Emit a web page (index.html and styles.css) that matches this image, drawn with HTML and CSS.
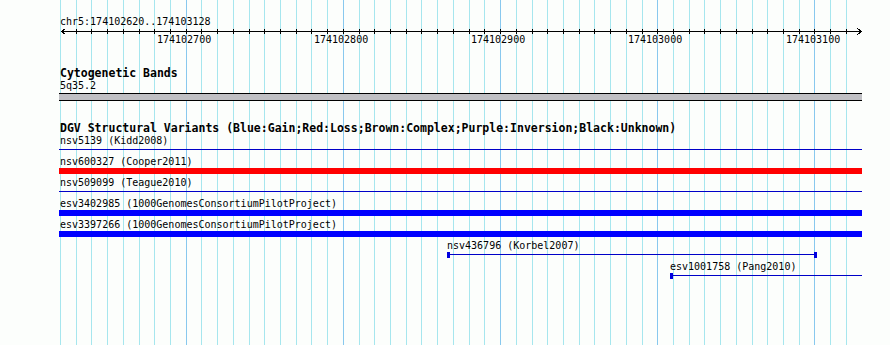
FILE: index.html
```html
<!DOCTYPE html>
<html lang="en">
<head>
<meta charset="utf-8">
<title>chr5:174102620..174103128</title>
<link rel="stylesheet" href="styles.css">
</head>
<body>
<div class="panel">
  <svg class="grid" width="890" height="345" viewBox="0 0 890 345" aria-hidden="true">
    <path class="grid-minor" d="M60.5 0V345M76.5 0V345M91.5 0V345M107.5 0V345M123.5 0V345M139.5 0V345M154.5 0V345M170.5 0V345M201.5 0V345M217.5 0V345M233.5 0V345M249.5 0V345M264.5 0V345M280.5 0V345M296.5 0V345M311.5 0V345M327.5 0V345M359.5 0V345M374.5 0V345M390.5 0V345M406.5 0V345M421.5 0V345M437.5 0V345M453.5 0V345M469.5 0V345M484.5 0V345M516.5 0V345M532.5 0V345M547.5 0V345M563.5 0V345M579.5 0V345M594.5 0V345M610.5 0V345M626.5 0V345M642.5 0V345M673.5 0V345M689.5 0V345M704.5 0V345M720.5 0V345M736.5 0V345M752.5 0V345M767.5 0V345M783.5 0V345M799.5 0V345M830.5 0V345M846.5 0V345"/>
    <path class="grid-major" d="M186.5 0V345M343.5 0V345M500.5 0V345M657.5 0V345M814.5 0V345"/>
  </svg>

  <div class="tracks">
    <section class="ruler">
      <div class="ruler-title">chr5:174102620..174103128</div>
      <svg class="ruler-axis" width="803" height="6" viewBox="0 0 803 6" aria-hidden="true">
        <path class="axis-line" d="M2 3.5H802"/>
        <path class="axis-ticks" d="M17.5 1v5M32.5 1v5M48.5 1v5M64.5 1v5M80.5 1v5M95.5 1v5M111.5 1v5M127.5 1v5M142.5 1v5M158.5 1v5M174.5 1v5M190.5 1v5M205.5 1v5M221.5 1v5M237.5 1v5M252.5 1v5M268.5 1v5M284.5 1v5M300.5 1v5M315.5 1v5M331.5 1v5M347.5 1v5M362.5 1v5M378.5 1v5M394.5 1v5M410.5 1v5M425.5 1v5M441.5 1v5M457.5 1v5M473.5 1v5M488.5 1v5M504.5 1v5M520.5 1v5M535.5 1v5M551.5 1v5M567.5 1v5M583.5 1v5M598.5 1v5M614.5 1v5M630.5 1v5M645.5 1v5M661.5 1v5M677.5 1v5M693.5 1v5M708.5 1v5M724.5 1v5M740.5 1v5M755.5 1v5M771.5 1v5M787.5 1v5"/>
        <path class="axis-arrow" d="M6.5 0.5L2.5 3.5L6.5 6.5M798.5 0.5L802.5 3.5L798.5 6.5"/>
      </svg>
      <div class="ruler-labels">
        <span class="tick-label" style="left:98px">174102700</span>
        <span class="tick-label" style="left:255px">174102800</span>
        <span class="tick-label" style="left:412px">174102900</span>
        <span class="tick-label" style="left:569px">174103000</span>
        <span class="tick-label" style="left:727px">174103100</span>
      </div>
    </section>

    <section class="track track-cyto">
      <h2 class="track-title">Cytogenetic Bands</h2>
      <div class="feature-label pad">5q35.2</div>
      <div class="band"></div>
    </section>

    <section class="track track-dgv">
      <h2 class="track-title">DGV Structural Variants (Blue:Gain;Red:Loss;Brown:Complex;Purple:Inversion;Black:Unknown)</h2>

      <div class="feature">
        <div class="feature-label pad">nsv5139 (Kidd2008)</div>
        <div class="glyph line"></div>
      </div>
      <div class="feature">
        <div class="feature-label pad">nsv600327 (Cooper2011)</div>
        <div class="glyph bar bar-loss"></div>
      </div>
      <div class="feature">
        <div class="feature-label pad">nsv509099 (Teague2010)</div>
        <div class="glyph line"></div>
      </div>
      <div class="feature">
        <div class="feature-label pad">esv3402985 (1000GenomesConsortiumPilotProject)</div>
        <div class="glyph bar bar-gain"></div>
      </div>
      <div class="feature">
        <div class="feature-label pad">esv3397266 (1000GenomesConsortiumPilotProject)</div>
        <div class="glyph bar bar-gain"></div>
      </div>
      <div class="feature" style="margin-left:388px;width:370px">
        <div class="feature-label">nsv436796 (Korbel2007)</div>
        <div class="glyph line cap-left cap-right"></div>
      </div>
      <div class="feature" style="margin-left:611px;width:192px">
        <div class="feature-label">esv1001758 (Pang2010)</div>
        <div class="glyph line cap-left"></div>
      </div>
    </section>
  </div>
</div>
</body>
</html>
```

FILE: styles.css
```css
* {
  box-sizing: border-box;
  margin: 0;
  padding: 0;
}

body {
  margin: 0;
  background: #fcfefc;
}

.panel {
  position: relative;
  width: 890px;
  height: 345px;
  overflow: hidden;
  font-family: "DejaVu Sans Mono", "Liberation Mono", monospace;
  font-size: 10px;
  color: #000;
  background: #fcfefc;
}

/* background grid layer */
.grid {
  position: absolute;
  left: 0;
  top: 0;
  shape-rendering: crispEdges;
}

.grid-minor {
  stroke: #a6e6ee;
  stroke-width: 1;
  fill: none;
}

.grid-major {
  stroke: #88c8ee;
  stroke-width: 1;
  fill: none;
}

/* content column */
.tracks {
  position: relative;
  margin-left: 59px;
  width: 803px;
  padding-top: 15px;
}

.ruler-title {
  line-height: 13px;
  padding-left: 1px;
  white-space: nowrap;
}

.ruler-axis {
  display: block;
  overflow: visible;
  shape-rendering: crispEdges;
}

.axis-line,
.axis-ticks {
  stroke: #000;
  stroke-width: 1;
  fill: none;
}

.axis-arrow {
  stroke: #000;
  stroke-width: 1;
  fill: none;
}

.ruler-labels {
  position: relative;
  height: 12px;
  line-height: 12px;
}

.tick-label {
  position: absolute;
  top: 0;
  white-space: nowrap;
}

.track-title {
  font-size: 11.5px;
  font-weight: bold;
  line-height: 12px;
  padding-left: 1px;
  white-space: nowrap;
}

.track-cyto {
  margin-top: 21px;
}

.track-dgv {
  margin-top: 21px;
}

.feature-label {
  line-height: 13px;
  height: 13px;
  white-space: nowrap;
}

.feature-label.pad {
  padding-left: 1px;
}

.band {
  margin-top: 1px;
  height: 8px;
  background: #c0c0c4;
  border-top: 1px solid #000;
  border-bottom: 1px solid #000;
}

.feature {
  height: 21px;
}

.glyph {
  height: 6px;
}

.bar-loss {
  background: #ff0000;
}

.bar-gain {
  background: #0000ff;
}

.line {
  background: linear-gradient(#0000c8, #0000c8) 0 2px / 100% 1px no-repeat;
}

.cap-left {
  border-left: 3px solid #0000e0;
}

.cap-right {
  border-right: 3px solid #0000e0;
}
```
